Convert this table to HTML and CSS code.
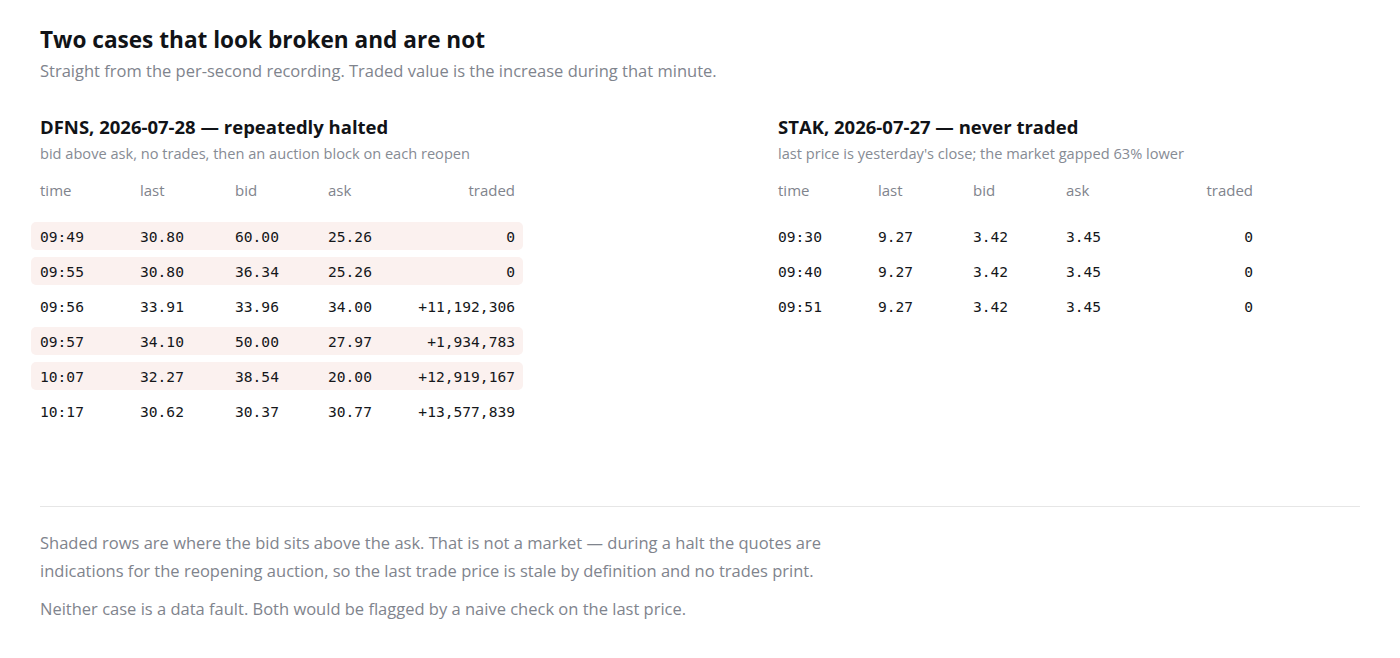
FILE: index.html
```html
<!DOCTYPE html>
<html lang="en">
<head>
<meta charset="utf-8">
<title>Two cases that look broken and are not</title>
<link rel="stylesheet" href="styles.css">
</head>
<body>
<main class="page">
  <header class="intro">
    <h1 class="title">Two cases that look broken and are not</h1>
    <p class="lede">Straight from the per-second recording. Traded value is the increase during that minute.</p>
  </header>

  <div class="cases">
    <section class="case">
      <h2 class="case-title">DFNS, 2026-07-28 — repeatedly halted</h2>
      <p class="case-sub">bid above ask, no trades, then an auction block on each reopen</p>
      <div class="grid">
        <div class="row head"><span>time</span><span>last</span><span>bid</span><span>ask</span><span class="num">traded</span></div>
        <div class="row data shaded"><span>09:49</span><span>30.80</span><span>60.00</span><span>25.26</span><span class="num">0</span></div>
        <div class="row data shaded"><span>09:55</span><span>30.80</span><span>36.34</span><span>25.26</span><span class="num">0</span></div>
        <div class="row data"><span>09:56</span><span>33.91</span><span>33.96</span><span>34.00</span><span class="num">+11,192,306</span></div>
        <div class="row data shaded"><span>09:57</span><span>34.10</span><span>50.00</span><span>27.97</span><span class="num">+1,934,783</span></div>
        <div class="row data shaded"><span>10:07</span><span>32.27</span><span>38.54</span><span>20.00</span><span class="num">+12,919,167</span></div>
        <div class="row data"><span>10:17</span><span>30.62</span><span>30.37</span><span>30.77</span><span class="num">+13,577,839</span></div>
      </div>
    </section>

    <section class="case">
      <h2 class="case-title">STAK, 2026-07-27 — never traded</h2>
      <p class="case-sub">last price is yesterday's close; the market gapped 63% lower</p>
      <div class="grid">
        <div class="row head"><span>time</span><span>last</span><span>bid</span><span>ask</span><span class="num">traded</span></div>
        <div class="row data"><span>09:30</span><span>9.27</span><span>3.42</span><span>3.45</span><span class="num">0</span></div>
        <div class="row data"><span>09:40</span><span>9.27</span><span>3.42</span><span>3.45</span><span class="num">0</span></div>
        <div class="row data"><span>09:51</span><span>9.27</span><span>3.42</span><span>3.45</span><span class="num">0</span></div>
      </div>
    </section>
  </div>

  <footer class="notes">
    <p>Shaded rows are where the bid sits above the ask. That is not a market — during a halt the quotes are indications for the reopening auction, so the last trade price is stale by definition and no trades print.</p>
    <p>Neither case is a data fault. Both would be flagged by a naive check on the last price.</p>
  </footer>
</main>
</body>
</html>
```

FILE: styles.css
```css
* { box-sizing: border-box; }

html, body {
  margin: 0;
  padding: 0;
  background: #ffffff;
}

body {
  font-family: "Open Sans", "Noto Sans", "Liberation Sans", sans-serif;
  color: #15171a;
}

.page {
  padding: 25px 40px 0 40px;
  width: 1400px;
}

.title {
  margin: 0;
  font-size: 22.6px;
  line-height: 30px;
  font-weight: 700;
  color: #111317;
}

.lede {
  margin: 4px 0 0 0;
  font-size: 16.5px;
  line-height: 24px;
  color: #7f848d;
}

.cases {
  display: grid;
  grid-template-columns: 690px 1fr;
  column-gap: 48px;
  margin-top: 32px;
}

.case-title {
  margin: 0;
  font-size: 18.5px;
  line-height: 24px;
  font-weight: 700;
  color: #111317;
}

.case-sub {
  margin: 4px 0 0 0;
  font-size: 14.6px;
  line-height: 20px;
  color: #868b94;
}

.grid {
  display: flex;
  flex-direction: column;
  gap: 7px;
  margin: 13px 0 0 -9px;
  width: 492px;
}

.row {
  display: grid;
  grid-template-columns: 100px 95px 93px 80px 1fr;
  align-items: center;
  height: 28px;
  padding: 0 8px 0 9px;
  border-radius: 5px;
}

.row.head {
  margin-bottom: 11px;
  font-size: 15px;
  color: #7f848d;
}

.row.data {
  font-family: "DejaVu Sans Mono", "Liberation Mono", monospace;
  font-size: 14.6px;
  color: #15171a;
}

.row.shaded {
  background: #fbf1ef;
}

.num {
  text-align: right;
}

.notes {
  margin-top: 81px;
  border-top: 1px solid #e6e6e6;
  padding-top: 22px;
  width: 1320px;
}

.notes p {
  margin: 0 0 10px 0;
  max-width: 800px;
  font-size: 16.5px;
  line-height: 28px;
  color: #7f848d;
}
```
